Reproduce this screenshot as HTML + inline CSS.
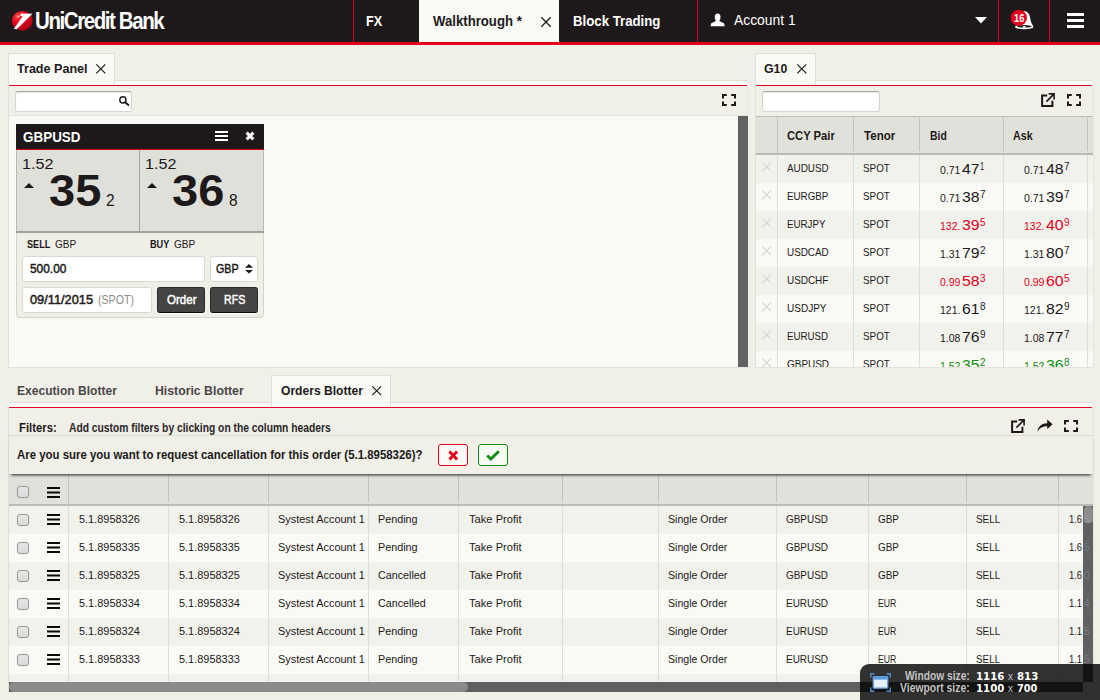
<!DOCTYPE html>
<html lang="en">
<head>
<meta charset="utf-8">
<title>UniCredit Bank - FX Trading</title>
<style>
*{box-sizing:border-box;margin:0;padding:0}
html,body{width:1100px;height:700px;overflow:hidden}
body{position:relative;background:#f0f0e9;font-family:"Liberation Sans",sans-serif;color:#1d191a;font-size:12px}
svg{display:block;overflow:visible}
.t{position:absolute;white-space:pre;line-height:1;transform-origin:0 50%}
</style>
</head>
<body>
<div style="position:absolute;left:0px;top:0px;width:1100px;height:42px;background:#1d191a;"></div>
<div style="position:absolute;left:0px;top:42px;width:1100px;height:3px;background:#e2001a;"></div>
<svg style="position:absolute;left:11px;top:10px" width="22" height="22" viewBox="0 0 22 22"><defs><radialGradient id="lg" cx="30%" cy="28%" r="80%"><stop offset="0" stop-color="#ffc4bc"/><stop offset=".12" stop-color="#f53030"/><stop offset=".5" stop-color="#e2001a"/><stop offset="1" stop-color="#a20015"/></radialGradient></defs>
<ellipse cx="11.3" cy="10.8" rx="10.4" ry="9.9" fill="url(#lg)"/>
<path d="M9.7 3.5L21.5 3.8L5.7 19.3L2.7 19L11.7 6.6L9.2 5.8Z" fill="#fff"/></svg>
<span class="t" style="left:34.61px;top:10px;font-size:23px;font-weight:bold;color:#fff;transform:scaleX(0.8925);letter-spacing:-1.6px;">UniCredit Bank</span>
<div style="position:absolute;left:353px;top:0px;width:1px;height:42px;background:#dc001b;"></div>
<div style="position:absolute;left:697px;top:0px;width:1px;height:42px;background:#dc001b;"></div>
<div style="position:absolute;left:998px;top:0px;width:1px;height:42px;background:#dc001b;"></div>
<div style="position:absolute;left:1049px;top:0px;width:1px;height:42px;background:#dc001b;"></div>
<span class="t" style="left:365.80px;top:14px;font-size:14px;font-weight:bold;color:#fff;transform:scaleX(0.9056);">FX</span>
<div style="position:absolute;left:419px;top:0px;width:140px;height:42px;background:#f9f9f5;"></div>
<span class="t" style="left:432.70px;top:14px;font-size:14px;font-weight:bold;color:#1d191a;transform:scaleX(0.9408);">Walkthrough *</span>
<svg style="position:absolute;left:541px;top:16.5px" width="10" height="10" viewBox="0 0 10 10"><path d="M.3 .3L9.7 9.7M9.7 .3L.3 9.7" stroke="#1d191a" stroke-width="1.25" fill="none"/></svg>
<span class="t" style="left:572.70px;top:14px;font-size:14px;font-weight:bold;color:#fff;transform:scaleX(0.9444);">Block Trading</span>
<svg style="position:absolute;left:710px;top:13px" width="15" height="14" viewBox="0 0 15 14"><ellipse cx="7.6" cy="4.1" rx="2.9" ry="3.5" fill="#fff"/><path d="M5.9 6.2L9.3 6.2L9.7 8.2L14 10.2L14.8 13.3L.4 13.3L1.2 10.2L5.5 8.2Z" fill="#fff"/></svg>
<span class="t" style="left:734.40px;top:12px;font-size:15px;color:#fff;transform:scaleX(0.9237);">Account 1</span>
<svg style="position:absolute;left:975px;top:17px" width="12" height="7" viewBox="0 0 12 7"><path d="M0 0L12 0L6 6.6Z" fill="#fff"/></svg>
<svg style="position:absolute;left:1010px;top:9px" width="24" height="21" viewBox="0 0 24 21"><path d="M13.6 2C17.6 2 19.6 5 20.2 9C20.6 12 21.4 14.8 23.3 17L8 17C9 12 9 4 13.6 2Z" fill="#fff"/>
<ellipse cx="14.2" cy="17.9" rx="9.2" ry="2.3" fill="#fff"/><ellipse cx="14.4" cy="17.3" rx="7.4" ry="1.25" fill="#1d191a"/><ellipse cx="14.2" cy="17.9" rx="1.6" ry=".8" fill="#fff"/>
<circle cx="8.8" cy="8.8" r="8.1" fill="#e2001a"/></svg>
<span class="t" style="left:1013.60px;top:14px;font-size:10px;font-weight:bold;color:#fff;transform:scaleX(0.9341);">16</span>
<div style="position:absolute;left:1067px;top:13px;width:17px;height:3.3px;background:#fff;"></div>
<div style="position:absolute;left:1067px;top:19px;width:17px;height:3.3px;background:#fff;"></div>
<div style="position:absolute;left:1067px;top:25px;width:17px;height:3.3px;background:#fff;"></div>
<div style="position:absolute;left:9px;top:80px;width:738px;height:1px;background:#e0e0d9;"></div>
<div style="position:absolute;left:9px;top:81px;width:738px;height:4px;background:#fbfbf8;"></div>
<div style="position:absolute;left:9px;top:85px;width:738px;height:1px;background:#dc0a26;"></div>
<div style="position:absolute;left:8px;top:53px;width:107px;height:32px;background:#f9f9f5;border:1px solid #e0e0d9;border-bottom:none"></div>
<span class="t" style="left:17.00px;top:62px;font-size:13px;font-weight:bold;color:#1d191a;transform:scaleX(0.9673);">Trade Panel</span>
<svg style="position:absolute;left:96.3px;top:63.6px" width="9.6" height="9.6" viewBox="0 0 9.6 9.6"><path d="M.3 .3L9.299999999999999 9.299999999999999M9.299999999999999 .3L.3 9.299999999999999" stroke="#1d191a" stroke-width="1.15" fill="none"/></svg>
<div style="position:absolute;left:8px;top:86px;width:1px;height:281px;background:#e0e0d9;"></div>
<div style="position:absolute;left:747px;top:86px;width:1px;height:281px;background:#e6e6df;"></div>
<div style="position:absolute;left:9px;top:115px;width:738px;height:1px;background:#e4e4dd;"></div>
<div style="position:absolute;left:9px;top:116px;width:729px;height:251px;background:#f9f9f5;"></div>
<div style="position:absolute;left:738px;top:116px;width:10px;height:251px;background:#626262;"></div>
<div style="position:absolute;left:8px;top:367px;width:740px;height:1px;background:#e4e4dd;"></div>
<div style="position:absolute;left:15px;top:91px;width:117px;height:21px;background:#fff;border:1px solid #d6d6cf;border-top-color:#a9a9a4;border-radius:3px;box-shadow:inset 0 1px 1px rgba(0,0,0,.10)"></div>
<svg style="position:absolute;left:118.7px;top:96px" width="10.4" height="9.8" viewBox="0 0 10.4 9.8"><circle cx="3.9" cy="3.9" r="3.1" stroke="#1d191a" stroke-width="1.4" fill="none"/><path d="M6.2 6.2L9.4 9" stroke="#1d191a" stroke-width="1.9" stroke-linecap="round"/></svg>
<svg style="position:absolute;left:722px;top:94px" width="14" height="12" viewBox="0 0 14 12"><path d="M1 4.6V1H4.8M9.2 1H13V4.6M13 7.4V11H9.2M4.8 11H1V7.4" stroke="#1d191a" stroke-width="2" fill="none"/></svg>
<div style="position:absolute;left:16px;top:124px;width:248px;height:194px;background:#efefe8;border:1px solid #d3d3cc;border-radius:0 0 4px 4px"></div>
<div style="position:absolute;left:16px;top:124px;width:248px;height:25px;background:#1d191a;"></div>
<div style="position:absolute;left:16px;top:149px;width:248px;height:1px;background:#d8001c;"></div>
<span class="t" style="left:23.40px;top:130px;font-size:14px;font-weight:bold;color:#fff;transform:scaleX(0.9601);">GBPUSD</span>
<div style="position:absolute;left:215px;top:131px;width:13px;height:2px;background:#fff;"></div>
<div style="position:absolute;left:215px;top:135px;width:13px;height:2px;background:#fff;"></div>
<div style="position:absolute;left:215px;top:139px;width:13px;height:2px;background:#fff;"></div>
<svg style="position:absolute;left:245px;top:131px" width="10" height="10" viewBox="0 0 10 10"><path d="M1.6 1.6L8.4 8.4M8.4 1.6L1.6 8.4" stroke="#fff" stroke-width="3" fill="none"/></svg>
<div style="position:absolute;left:17px;top:150px;width:246px;height:81px;background:#e0e0da;"></div>
<div style="position:absolute;left:16px;top:150px;width:1px;height:81px;background:#b9b9b3;"></div>
<div style="position:absolute;left:263px;top:150px;width:1px;height:81px;background:#b9b9b3;"></div>
<div style="position:absolute;left:139px;top:150px;width:1px;height:81px;background:#a4a49f;"></div>
<div style="position:absolute;left:16px;top:231px;width:248px;height:2px;background:#a2a29d;"></div>
<span class="t" style="left:21.82px;top:156px;font-size:15px;color:#1d191a;transform:scaleX(1.0771);">1.52</span>
<svg style="position:absolute;left:24px;top:183px" width="10" height="5" viewBox="0 0 10 5"><path d="M0 5L5 0L10 5Z" fill="#1d191a"/></svg>
<span class="t" style="left:48.75px;top:168px;font-size:45px;font-weight:bold;color:#1d191a;transform:scaleX(1.0452);">35</span>
<span class="t" style="left:105.50px;top:193px;font-size:16px;color:#1d191a;transform:scaleX(0.9667);">2</span>
<span class="t" style="left:145.12px;top:156px;font-size:15px;color:#1d191a;transform:scaleX(1.0771);">1.52</span>
<svg style="position:absolute;left:147.3px;top:183px" width="10" height="5" viewBox="0 0 10 5"><path d="M0 5L5 0L10 5Z" fill="#1d191a"/></svg>
<span class="t" style="left:172.05px;top:168px;font-size:45px;font-weight:bold;color:#1d191a;transform:scaleX(1.0452);">36</span>
<span class="t" style="left:228.80px;top:193px;font-size:16px;color:#1d191a;transform:scaleX(0.9667);">8</span>
<span class="t" style="left:27.20px;top:239px;font-size:11px;font-weight:bold;color:#1d191a;transform:scaleX(0.8347);">SELL</span>
<span class="t" style="left:55.00px;top:239px;font-size:11px;color:#1d191a;transform:scaleX(0.9129);">GBP</span>
<span class="t" style="left:150.40px;top:239px;font-size:11px;font-weight:bold;color:#1d191a;transform:scaleX(0.8331);">BUY</span>
<span class="t" style="left:174.40px;top:239px;font-size:11px;color:#1d191a;transform:scaleX(0.9129);">GBP</span>
<div style="position:absolute;left:22px;top:256px;width:183px;height:26px;background:#fff;border:1px solid #d9d9d2;border-radius:3px"></div>
<div style="position:absolute;left:210px;top:256px;width:48px;height:26px;background:#fff;border:1px solid #d9d9d2;border-radius:3px"></div>
<div style="position:absolute;left:22px;top:287px;width:130px;height:26px;background:#fff;border:1px solid #d9d9d2;border-radius:3px"></div>
<span class="t" style="left:29.60px;top:263px;font-size:12px;-webkit-text-stroke:.45px;color:#1d191a;transform:scaleX(0.9911);">500.00</span>
<span class="t" style="left:216.30px;top:263px;font-size:12px;-webkit-text-stroke:.45px;color:#1d191a;transform:scaleX(0.8919);">GBP</span>
<svg style="position:absolute;left:245px;top:264px" width="8" height="10" viewBox="0 0 8 10"><path d="M0 3.8L4 0L8 3.8ZM0 6L8 6L4 9.6Z" fill="#1d191a"/></svg>
<span class="t" style="left:29.60px;top:294px;font-size:12px;-webkit-text-stroke:.45px;color:#1d191a;transform:scaleX(1.0657);">09/11/2015</span>
<span class="t" style="left:97.50px;top:294px;font-size:12px;color:#8d8d88;transform:scaleX(0.8852);">(SPOT)</span>
<div style="position:absolute;left:157px;top:287px;width:48px;height:26px;background:#464443;border:1px solid #2b2929;border-bottom-color:#0e0c0c;border-radius:3px;box-shadow:0 1px 0 #fbfbf8"></div>
<div style="position:absolute;left:210px;top:287px;width:48px;height:26px;background:#464443;border:1px solid #2b2929;border-bottom-color:#0e0c0c;border-radius:3px;box-shadow:0 1px 0 #fbfbf8"></div>
<span class="t" style="left:166.50px;top:294px;font-size:12px;-webkit-text-stroke:.45px;color:#fff;transform:scaleX(0.9616);">Order</span>
<span class="t" style="left:223.80px;top:294px;font-size:12px;-webkit-text-stroke:.45px;color:#fff;transform:scaleX(0.8876);">RFS</span>
<div style="position:absolute;left:756px;top:80px;width:336px;height:1px;background:#e0e0d9;"></div>
<div style="position:absolute;left:756px;top:81px;width:336px;height:4px;background:#fbfbf8;"></div>
<div style="position:absolute;left:756px;top:85px;width:336px;height:1px;background:#dc0a26;"></div>
<div style="position:absolute;left:755px;top:53px;width:61px;height:32px;background:#f9f9f5;border:1px solid #e0e0d9;border-bottom:none"></div>
<span class="t" style="left:764.30px;top:62px;font-size:13px;font-weight:bold;color:#1d191a;transform:scaleX(0.9490);">G10</span>
<svg style="position:absolute;left:796.8px;top:63.6px" width="9.6" height="9.6" viewBox="0 0 9.6 9.6"><path d="M.3 .3L9.299999999999999 9.299999999999999M9.299999999999999 .3L.3 9.299999999999999" stroke="#1d191a" stroke-width="1.15" fill="none"/></svg>
<div style="position:absolute;left:755px;top:86px;width:1px;height:281px;background:#e0e0d9;"></div>
<div style="position:absolute;left:1093px;top:86px;width:1px;height:281px;background:#e6e6df;"></div>
<div style="position:absolute;left:762px;top:91px;width:118px;height:21px;background:#fff;border:1px solid #d6d6cf;border-top-color:#a9a9a4;border-radius:3px;box-shadow:inset 0 1px 1px rgba(0,0,0,.10)"></div>
<svg style="position:absolute;left:1041px;top:93px" width="14" height="14" viewBox="0 0 14 14"><path d="M6.2 2.6H1.1V12.9H11.4V7.8" stroke="#1d191a" stroke-width="2" fill="none"/><path d="M5.4 8.6L12.6 1.4M7.6 .9H13.1V6.4" stroke="#1d191a" stroke-width="1.6" fill="none"/></svg>
<svg style="position:absolute;left:1067px;top:94px" width="14" height="12" viewBox="0 0 14 12"><path d="M1 4.6V1H4.8M9.2 1H13V4.6M13 7.4V11H9.2M4.8 11H1V7.4" stroke="#1d191a" stroke-width="2" fill="none"/></svg>
<div style="position:absolute;left:756px;top:116px;width:337px;height:1px;background:#bdbdb7;"></div>
<div style="position:absolute;left:756px;top:117px;width:337px;height:36px;background:#e1e1db;"></div>
<div style="position:absolute;left:756px;top:153px;width:337px;height:2px;background:#babab4;"></div>
<div style="position:absolute;left:756px;top:155px;width:337px;height:28px;background:#f2f2ed;"></div>
<div style="position:absolute;left:756px;top:183px;width:337px;height:28px;background:#f9f9f5;"></div>
<div style="position:absolute;left:756px;top:211px;width:337px;height:28px;background:#f2f2ed;"></div>
<div style="position:absolute;left:756px;top:239px;width:337px;height:28px;background:#f9f9f5;"></div>
<div style="position:absolute;left:756px;top:267px;width:337px;height:28px;background:#f2f2ed;"></div>
<div style="position:absolute;left:756px;top:295px;width:337px;height:28px;background:#f9f9f5;"></div>
<div style="position:absolute;left:756px;top:323px;width:337px;height:28px;background:#f2f2ed;"></div>
<div style="position:absolute;left:756px;top:351px;width:337px;height:16px;background:#f9f9f5;"></div>
<div style="position:absolute;left:756px;top:367px;width:338px;height:1px;background:#e4e4dd;"></div>
<div style="position:absolute;left:777px;top:117px;width:1px;height:38px;background:#c3c3bd;"></div>
<div style="position:absolute;left:777px;top:155px;width:1px;height:212px;background:#deded8;"></div>
<div style="position:absolute;left:853px;top:117px;width:1px;height:34px;background:#c3c3bd;"></div>
<div style="position:absolute;left:853px;top:155px;width:1px;height:212px;background:#deded8;"></div>
<div style="position:absolute;left:919px;top:117px;width:1px;height:34px;background:#c3c3bd;"></div>
<div style="position:absolute;left:919px;top:155px;width:1px;height:212px;background:#deded8;"></div>
<div style="position:absolute;left:1003px;top:117px;width:1px;height:34px;background:#c3c3bd;"></div>
<div style="position:absolute;left:1003px;top:155px;width:1px;height:212px;background:#deded8;"></div>
<div style="position:absolute;left:1087px;top:117px;width:1px;height:34px;background:#c3c3bd;"></div>
<div style="position:absolute;left:1087px;top:155px;width:1px;height:212px;background:#deded8;"></div>
<span class="t" style="left:787.00px;top:129px;font-size:13px;font-weight:bold;color:#1d191a;transform:scaleX(0.8637);">CCY Pair</span>
<span class="t" style="left:863.70px;top:129px;font-size:13px;font-weight:bold;color:#1d191a;transform:scaleX(0.8920);">Tenor</span>
<span class="t" style="left:929.50px;top:129px;font-size:13px;font-weight:bold;color:#1d191a;transform:scaleX(0.8000);">Bid</span>
<span class="t" style="left:1013.10px;top:129px;font-size:13px;font-weight:bold;color:#1d191a;transform:scaleX(0.8205);">Ask</span>
<svg style="position:absolute;left:761.8px;top:162.4px" width="9.4" height="9.4" viewBox="0 0 9.4 9.4"><path d="M.3 .3L9.1 9.1M9.1 .3L.3 9.1" stroke="#d2d4d8" stroke-width="1.1" fill="none"/></svg>
<span class="t" style="left:787.40px;top:163px;font-size:11px;color:#1d191a;transform:scaleX(0.8988);">AUDUSD</span>
<span class="t" style="left:863.10px;top:163px;font-size:11px;color:#1d191a;transform:scaleX(0.8965);">SPOT</span>
<span class="t" style="left:940.30px;top:165px;font-size:11px;color:#1d191a;transform:scaleX(0.9534);">0.71</span>
<span class="t" style="left:962.00px;top:161px;font-size:15px;color:#1d191a;transform:scaleX(1.0525);">47</span>
<span class="t" style="left:980.00px;top:161px;font-size:11px;color:#1d191a;transform:scaleX(0.6833);">1</span>
<span class="t" style="left:1024.30px;top:165px;font-size:11px;color:#1d191a;transform:scaleX(0.9534);">0.71</span>
<span class="t" style="left:1046.00px;top:161px;font-size:15px;color:#1d191a;transform:scaleX(1.0525);">48</span>
<span class="t" style="left:1064.00px;top:161px;font-size:11px;color:#1d191a;transform:scaleX(0.9000);">7</span>
<svg style="position:absolute;left:761.8px;top:190.4px" width="9.4" height="9.4" viewBox="0 0 9.4 9.4"><path d="M.3 .3L9.1 9.1M9.1 .3L.3 9.1" stroke="#d2d4d8" stroke-width="1.1" fill="none"/></svg>
<span class="t" style="left:787.40px;top:191px;font-size:11px;color:#1d191a;transform:scaleX(0.8912);">EURGBP</span>
<span class="t" style="left:863.10px;top:191px;font-size:11px;color:#1d191a;transform:scaleX(0.8965);">SPOT</span>
<span class="t" style="left:940.30px;top:193px;font-size:11px;color:#1d191a;transform:scaleX(0.9534);">0.71</span>
<span class="t" style="left:962.00px;top:189px;font-size:15px;color:#1d191a;transform:scaleX(1.0525);">38</span>
<span class="t" style="left:980.00px;top:189px;font-size:11px;color:#1d191a;transform:scaleX(0.9000);">7</span>
<span class="t" style="left:1024.30px;top:193px;font-size:11px;color:#1d191a;transform:scaleX(0.9534);">0.71</span>
<span class="t" style="left:1046.00px;top:189px;font-size:15px;color:#1d191a;transform:scaleX(1.0525);">39</span>
<span class="t" style="left:1064.00px;top:189px;font-size:11px;color:#1d191a;transform:scaleX(0.9000);">7</span>
<svg style="position:absolute;left:761.8px;top:218.4px" width="9.4" height="9.4" viewBox="0 0 9.4 9.4"><path d="M.3 .3L9.1 9.1M9.1 .3L.3 9.1" stroke="#d2d4d8" stroke-width="1.1" fill="none"/></svg>
<span class="t" style="left:787.40px;top:219px;font-size:11px;color:#1d191a;transform:scaleX(0.8874);">EURJPY</span>
<span class="t" style="left:863.10px;top:219px;font-size:11px;color:#1d191a;transform:scaleX(0.8965);">SPOT</span>
<span class="t" style="left:940.30px;top:221px;font-size:11px;color:#e2001a;transform:scaleX(0.9507);">132.</span>
<span class="t" style="left:962.00px;top:217px;font-size:15px;color:#e2001a;transform:scaleX(1.0525);">39</span>
<span class="t" style="left:980.00px;top:217px;font-size:11px;color:#e2001a;transform:scaleX(0.9000);">5</span>
<span class="t" style="left:1024.30px;top:221px;font-size:11px;color:#e2001a;transform:scaleX(0.9507);">132.</span>
<span class="t" style="left:1046.00px;top:217px;font-size:15px;color:#e2001a;transform:scaleX(1.0525);">40</span>
<span class="t" style="left:1064.00px;top:217px;font-size:11px;color:#e2001a;transform:scaleX(0.9000);">9</span>
<svg style="position:absolute;left:761.8px;top:246.4px" width="9.4" height="9.4" viewBox="0 0 9.4 9.4"><path d="M.3 .3L9.1 9.1M9.1 .3L.3 9.1" stroke="#d2d4d8" stroke-width="1.1" fill="none"/></svg>
<span class="t" style="left:787.40px;top:247px;font-size:11px;color:#1d191a;transform:scaleX(0.8988);">USDCAD</span>
<span class="t" style="left:863.10px;top:247px;font-size:11px;color:#1d191a;transform:scaleX(0.8965);">SPOT</span>
<span class="t" style="left:940.30px;top:249px;font-size:11px;color:#1d191a;transform:scaleX(0.9534);">1.31</span>
<span class="t" style="left:962.00px;top:245px;font-size:15px;color:#1d191a;transform:scaleX(1.0525);">79</span>
<span class="t" style="left:980.00px;top:245px;font-size:11px;color:#1d191a;transform:scaleX(0.9000);">2</span>
<span class="t" style="left:1024.30px;top:249px;font-size:11px;color:#1d191a;transform:scaleX(0.9534);">1.31</span>
<span class="t" style="left:1046.00px;top:245px;font-size:15px;color:#1d191a;transform:scaleX(1.0525);">80</span>
<span class="t" style="left:1064.00px;top:245px;font-size:11px;color:#1d191a;transform:scaleX(0.9000);">7</span>
<svg style="position:absolute;left:761.8px;top:274.4px" width="9.4" height="9.4" viewBox="0 0 9.4 9.4"><path d="M.3 .3L9.1 9.1M9.1 .3L.3 9.1" stroke="#d2d4d8" stroke-width="1.1" fill="none"/></svg>
<span class="t" style="left:787.40px;top:275px;font-size:11px;color:#1d191a;transform:scaleX(0.9021);">USDCHF</span>
<span class="t" style="left:863.10px;top:275px;font-size:11px;color:#1d191a;transform:scaleX(0.8965);">SPOT</span>
<span class="t" style="left:940.30px;top:277px;font-size:11px;color:#e2001a;transform:scaleX(0.9534);">0.99</span>
<span class="t" style="left:962.00px;top:273px;font-size:15px;color:#e2001a;transform:scaleX(1.0525);">58</span>
<span class="t" style="left:980.00px;top:273px;font-size:11px;color:#e2001a;transform:scaleX(0.9000);">3</span>
<span class="t" style="left:1024.30px;top:277px;font-size:11px;color:#e2001a;transform:scaleX(0.9534);">0.99</span>
<span class="t" style="left:1046.00px;top:273px;font-size:15px;color:#e2001a;transform:scaleX(1.0525);">60</span>
<span class="t" style="left:1064.00px;top:273px;font-size:11px;color:#e2001a;transform:scaleX(0.9000);">5</span>
<svg style="position:absolute;left:761.8px;top:302.4px" width="9.4" height="9.4" viewBox="0 0 9.4 9.4"><path d="M.3 .3L9.1 9.1M9.1 .3L.3 9.1" stroke="#d2d4d8" stroke-width="1.1" fill="none"/></svg>
<span class="t" style="left:787.40px;top:303px;font-size:11px;color:#1d191a;transform:scaleX(0.9101);">USDJPY</span>
<span class="t" style="left:863.10px;top:303px;font-size:11px;color:#1d191a;transform:scaleX(0.8965);">SPOT</span>
<span class="t" style="left:940.30px;top:305px;font-size:11px;color:#1d191a;transform:scaleX(0.9507);">121.</span>
<span class="t" style="left:962.00px;top:301px;font-size:15px;color:#1d191a;transform:scaleX(1.0525);">61</span>
<span class="t" style="left:980.00px;top:301px;font-size:11px;color:#1d191a;transform:scaleX(0.9000);">8</span>
<span class="t" style="left:1024.30px;top:305px;font-size:11px;color:#1d191a;transform:scaleX(0.9507);">121.</span>
<span class="t" style="left:1046.00px;top:301px;font-size:15px;color:#1d191a;transform:scaleX(1.0525);">82</span>
<span class="t" style="left:1064.00px;top:301px;font-size:11px;color:#1d191a;transform:scaleX(0.9000);">9</span>
<svg style="position:absolute;left:761.8px;top:330.4px" width="9.4" height="9.4" viewBox="0 0 9.4 9.4"><path d="M.3 .3L9.1 9.1M9.1 .3L.3 9.1" stroke="#d2d4d8" stroke-width="1.1" fill="none"/></svg>
<span class="t" style="left:787.40px;top:331px;font-size:11px;color:#1d191a;transform:scaleX(0.8838);">EURUSD</span>
<span class="t" style="left:863.10px;top:331px;font-size:11px;color:#1d191a;transform:scaleX(0.8965);">SPOT</span>
<span class="t" style="left:940.30px;top:333px;font-size:11px;color:#1d191a;transform:scaleX(0.9534);">1.08</span>
<span class="t" style="left:962.00px;top:329px;font-size:15px;color:#1d191a;transform:scaleX(1.0525);">76</span>
<span class="t" style="left:980.00px;top:329px;font-size:11px;color:#1d191a;transform:scaleX(0.9000);">9</span>
<span class="t" style="left:1024.30px;top:333px;font-size:11px;color:#1d191a;transform:scaleX(0.9534);">1.08</span>
<span class="t" style="left:1046.00px;top:329px;font-size:15px;color:#1d191a;transform:scaleX(1.0525);">77</span>
<span class="t" style="left:1064.00px;top:329px;font-size:11px;color:#1d191a;transform:scaleX(0.9000);">7</span>
<svg style="position:absolute;left:761.8px;top:358.4px" width="9.4" height="8.6" viewBox="0 0 9.4 8.6"><path d="M.3 .3L8.9 8.9M9.1 .3L.5 8.9" stroke="#d2d4d8" stroke-width="1.1" fill="none"/></svg>
<span class="t" style="left:787.40px;top:359px;font-size:11px;color:#1d191a;transform:scaleX(0.9052);clip-path:inset(0 0 3px 0);">GBPUSD</span>
<span class="t" style="left:863.10px;top:359px;font-size:11px;color:#1d191a;transform:scaleX(0.8965);clip-path:inset(0 0 3px 0);">SPOT</span>
<span class="t" style="left:940.30px;top:361px;font-size:11px;color:#128a12;transform:scaleX(0.9534);clip-path:inset(0 0 5px 0);">1.52</span>
<span class="t" style="left:962.00px;top:357px;font-size:15px;color:#128a12;transform:scaleX(1.0525);clip-path:inset(0 0 5px 0);">35</span>
<span class="t" style="left:980.00px;top:357px;font-size:11px;color:#128a12;transform:scaleX(0.9000);clip-path:inset(0 0 1px 0);">2</span>
<span class="t" style="left:1024.30px;top:361px;font-size:11px;color:#128a12;transform:scaleX(0.9534);clip-path:inset(0 0 5px 0);">1.52</span>
<span class="t" style="left:1046.00px;top:357px;font-size:15px;color:#128a12;transform:scaleX(1.0525);clip-path:inset(0 0 5px 0);">36</span>
<span class="t" style="left:1064.00px;top:357px;font-size:11px;color:#128a12;transform:scaleX(0.9000);clip-path:inset(0 0 1px 0);">8</span>
<div style="position:absolute;left:9px;top:402px;width:1083px;height:1px;background:#e0e0d9;"></div>
<div style="position:absolute;left:9px;top:403px;width:1083px;height:4px;background:#fbfbf8;"></div>
<div style="position:absolute;left:9px;top:407px;width:1083px;height:1px;background:#dc0a26;"></div>
<span class="t" style="left:17.10px;top:384px;font-size:13px;font-weight:bold;color:#4b4748;transform:scaleX(0.9287);">Execution Blotter</span>
<span class="t" style="left:154.60px;top:384px;font-size:13px;font-weight:bold;color:#4b4748;transform:scaleX(0.9441);">Historic Blotter</span>
<div style="position:absolute;left:271px;top:375px;width:120px;height:32px;background:#f9f9f5;border:1px solid #e0e0d9;border-bottom:none"></div>
<span class="t" style="left:280.60px;top:384px;font-size:13px;font-weight:bold;color:#1d191a;transform:scaleX(0.9299);">Orders Blotter</span>
<svg style="position:absolute;left:372px;top:385.6px" width="9.4" height="9.4" viewBox="0 0 9.4 9.4"><path d="M.3 .3L9.1 9.1M9.1 .3L.3 9.1" stroke="#1d191a" stroke-width="1.15" fill="none"/></svg>
<div style="position:absolute;left:8px;top:408px;width:1px;height:284px;background:#e0e0d9;"></div>
<div style="position:absolute;left:1093px;top:408px;width:1px;height:284px;background:#e6e6df;"></div>
<span class="t" style="left:19.40px;top:422px;font-size:12px;font-weight:bold;color:#1d191a;transform:scaleX(0.9433);">Filters:</span>
<span class="t" style="left:68.90px;top:422px;font-size:12px;font-weight:bold;color:#2a2627;transform:scaleX(0.8567);">Add custom filters by clicking on the column headers</span>
<svg style="position:absolute;left:1011px;top:418.5px" width="14" height="14" viewBox="0 0 14 14"><path d="M6.2 2.6H1.1V12.9H11.4V7.8" stroke="#1d191a" stroke-width="2" fill="none"/><path d="M5.4 8.6L12.6 1.4M7.6 .9H13.1V6.4" stroke="#1d191a" stroke-width="1.6" fill="none"/></svg>
<svg style="position:absolute;left:1037px;top:419px" width="17" height="13" viewBox="0 0 17 13"><path d="M.3 12.8C1.2 7.2 4.8 4.4 10.2 4.3V.6L15.6 5.3L10.2 10V7.2C6 7.2 2.6 8.6 .3 12.8Z" fill="#1d191a"/></svg>
<svg style="position:absolute;left:1064px;top:419.5px" width="14" height="12" viewBox="0 0 14 12"><path d="M1 4.6V1H4.8M9.2 1H13V4.6M13 7.4V11H9.2M4.8 11H1V7.4" stroke="#1d191a" stroke-width="2" fill="none"/></svg>
<div style="position:absolute;left:9px;top:435px;width:1084px;height:1px;background:#dadad3;"></div>
<div style="position:absolute;left:9px;top:474px;width:1084px;height:30px;background:#e1e1db;"></div>
<div style="position:absolute;left:9px;top:504px;width:1084px;height:2px;background:#babab4;"></div>
<div style="position:absolute;left:9px;top:506px;width:1084px;height:28px;background:#f2f2ed;"></div>
<div style="position:absolute;left:9px;top:534px;width:1084px;height:28px;background:#f9f9f5;"></div>
<div style="position:absolute;left:9px;top:562px;width:1084px;height:28px;background:#f2f2ed;"></div>
<div style="position:absolute;left:9px;top:590px;width:1084px;height:28px;background:#f9f9f5;"></div>
<div style="position:absolute;left:9px;top:618px;width:1084px;height:28px;background:#f2f2ed;"></div>
<div style="position:absolute;left:9px;top:646px;width:1084px;height:28px;background:#f9f9f5;"></div>
<div style="position:absolute;left:9px;top:674px;width:1084px;height:8px;background:#f2f2ed;"></div>
<div style="position:absolute;left:68px;top:474px;width:1px;height:32px;background:#c3c3bd;"></div>
<div style="position:absolute;left:68px;top:506px;width:1px;height:176px;background:#deded8;"></div>
<div style="position:absolute;left:168px;top:474px;width:1px;height:28px;background:#c3c3bd;"></div>
<div style="position:absolute;left:168px;top:506px;width:1px;height:176px;background:#deded8;"></div>
<div style="position:absolute;left:268px;top:474px;width:1px;height:28px;background:#c3c3bd;"></div>
<div style="position:absolute;left:268px;top:506px;width:1px;height:176px;background:#deded8;"></div>
<div style="position:absolute;left:368px;top:474px;width:1px;height:28px;background:#c3c3bd;"></div>
<div style="position:absolute;left:368px;top:506px;width:1px;height:176px;background:#deded8;"></div>
<div style="position:absolute;left:458px;top:474px;width:1px;height:28px;background:#c3c3bd;"></div>
<div style="position:absolute;left:458px;top:506px;width:1px;height:176px;background:#deded8;"></div>
<div style="position:absolute;left:562px;top:474px;width:1px;height:28px;background:#c3c3bd;"></div>
<div style="position:absolute;left:562px;top:506px;width:1px;height:176px;background:#deded8;"></div>
<div style="position:absolute;left:658px;top:474px;width:1px;height:28px;background:#c3c3bd;"></div>
<div style="position:absolute;left:658px;top:506px;width:1px;height:176px;background:#deded8;"></div>
<div style="position:absolute;left:776px;top:474px;width:1px;height:28px;background:#c3c3bd;"></div>
<div style="position:absolute;left:776px;top:506px;width:1px;height:176px;background:#deded8;"></div>
<div style="position:absolute;left:868px;top:474px;width:1px;height:28px;background:#c3c3bd;"></div>
<div style="position:absolute;left:868px;top:506px;width:1px;height:176px;background:#deded8;"></div>
<div style="position:absolute;left:966px;top:474px;width:1px;height:28px;background:#c3c3bd;"></div>
<div style="position:absolute;left:966px;top:506px;width:1px;height:176px;background:#deded8;"></div>
<div style="position:absolute;left:1058px;top:474px;width:1px;height:28px;background:#c3c3bd;"></div>
<div style="position:absolute;left:1058px;top:506px;width:1px;height:176px;background:#deded8;"></div>
<div style="position:absolute;left:17px;top:486px;width:12px;height:12px;background:linear-gradient(#e6e6e6,#dadada);border:1px solid #9d9d9d;border-radius:3px;box-shadow:0 0 1px rgba(0,0,0,.25)"></div>
<svg style="position:absolute;left:47px;top:487px" width="13" height="11" viewBox="0 0 13 11"><path d="M0 0H13V2H0ZM0 4.5H13V6.5H0ZM0 9H13V11H0Z" fill="#0c0809"/></svg>
<div style="position:absolute;left:17px;top:514px;width:12px;height:12px;background:linear-gradient(#e6e6e6,#dadada);border:1px solid #9d9d9d;border-radius:3px;box-shadow:0 0 1px rgba(0,0,0,.25)"></div>
<svg style="position:absolute;left:47px;top:514px" width="13" height="11" viewBox="0 0 13 11"><path d="M0 0H13V2H0ZM0 4.5H13V6.5H0ZM0 9H13V11H0Z" fill="#0c0809"/></svg>
<span class="t" style="left:78.50px;top:514px;font-size:11px;color:#1d191a;transform:scaleX(0.9942);">5.1.8958326</span>
<span class="t" style="left:178.50px;top:514px;font-size:11px;color:#1d191a;transform:scaleX(0.9942);">5.1.8958326</span>
<span class="t" style="left:277.70px;top:514px;font-size:11px;color:#1d191a;transform:scaleX(0.9929);">Systest Account 1</span>
<span class="t" style="left:378.10px;top:514px;font-size:11px;color:#1d191a;transform:scaleX(0.9813);">Pending</span>
<span class="t" style="left:468.60px;top:514px;font-size:11px;color:#1d191a;transform:scaleX(1.0133);">Take Profit</span>
<span class="t" style="left:668.10px;top:514px;font-size:11px;color:#1d191a;transform:scaleX(0.9615);">Single Order</span>
<span class="t" style="left:786.20px;top:514px;font-size:11px;color:#1d191a;transform:scaleX(0.9030);">GBPUSD</span>
<span class="t" style="left:878.30px;top:514px;font-size:11px;color:#1d191a;transform:scaleX(0.9042);">GBP</span>
<span class="t" style="left:976.40px;top:514px;font-size:11px;color:#1d191a;transform:scaleX(0.8958);">SELL</span>
<span class="t" style="left:1068.60px;top:514px;font-size:11px;color:#1d191a;transform:scaleX(0.8567);">1.6</span>
<div style="position:absolute;left:17px;top:542px;width:12px;height:12px;background:linear-gradient(#e6e6e6,#dadada);border:1px solid #9d9d9d;border-radius:3px;box-shadow:0 0 1px rgba(0,0,0,.25)"></div>
<svg style="position:absolute;left:47px;top:542px" width="13" height="11" viewBox="0 0 13 11"><path d="M0 0H13V2H0ZM0 4.5H13V6.5H0ZM0 9H13V11H0Z" fill="#0c0809"/></svg>
<span class="t" style="left:78.50px;top:542px;font-size:11px;color:#1d191a;transform:scaleX(0.9942);">5.1.8958335</span>
<span class="t" style="left:178.50px;top:542px;font-size:11px;color:#1d191a;transform:scaleX(0.9942);">5.1.8958335</span>
<span class="t" style="left:277.70px;top:542px;font-size:11px;color:#1d191a;transform:scaleX(0.9929);">Systest Account 1</span>
<span class="t" style="left:378.10px;top:542px;font-size:11px;color:#1d191a;transform:scaleX(0.9813);">Pending</span>
<span class="t" style="left:468.60px;top:542px;font-size:11px;color:#1d191a;transform:scaleX(1.0133);">Take Profit</span>
<span class="t" style="left:668.10px;top:542px;font-size:11px;color:#1d191a;transform:scaleX(0.9615);">Single Order</span>
<span class="t" style="left:786.20px;top:542px;font-size:11px;color:#1d191a;transform:scaleX(0.9030);">GBPUSD</span>
<span class="t" style="left:878.30px;top:542px;font-size:11px;color:#1d191a;transform:scaleX(0.9042);">GBP</span>
<span class="t" style="left:976.40px;top:542px;font-size:11px;color:#1d191a;transform:scaleX(0.8958);">SELL</span>
<span class="t" style="left:1068.60px;top:542px;font-size:11px;color:#1d191a;transform:scaleX(0.8567);">1.6</span>
<div style="position:absolute;left:17px;top:570px;width:12px;height:12px;background:linear-gradient(#e6e6e6,#dadada);border:1px solid #9d9d9d;border-radius:3px;box-shadow:0 0 1px rgba(0,0,0,.25)"></div>
<svg style="position:absolute;left:47px;top:570px" width="13" height="11" viewBox="0 0 13 11"><path d="M0 0H13V2H0ZM0 4.5H13V6.5H0ZM0 9H13V11H0Z" fill="#0c0809"/></svg>
<span class="t" style="left:78.50px;top:570px;font-size:11px;color:#1d191a;transform:scaleX(0.9942);">5.1.8958325</span>
<span class="t" style="left:178.50px;top:570px;font-size:11px;color:#1d191a;transform:scaleX(0.9942);">5.1.8958325</span>
<span class="t" style="left:277.70px;top:570px;font-size:11px;color:#1d191a;transform:scaleX(0.9929);">Systest Account 1</span>
<span class="t" style="left:378.10px;top:570px;font-size:11px;color:#1d191a;transform:scaleX(0.9774);">Cancelled</span>
<span class="t" style="left:468.60px;top:570px;font-size:11px;color:#1d191a;transform:scaleX(1.0133);">Take Profit</span>
<span class="t" style="left:668.10px;top:570px;font-size:11px;color:#1d191a;transform:scaleX(0.9615);">Single Order</span>
<span class="t" style="left:786.20px;top:570px;font-size:11px;color:#1d191a;transform:scaleX(0.9030);">GBPUSD</span>
<span class="t" style="left:878.30px;top:570px;font-size:11px;color:#1d191a;transform:scaleX(0.9042);">GBP</span>
<span class="t" style="left:976.40px;top:570px;font-size:11px;color:#1d191a;transform:scaleX(0.8958);">SELL</span>
<span class="t" style="left:1068.60px;top:570px;font-size:11px;color:#1d191a;transform:scaleX(0.8567);">1.6</span>
<div style="position:absolute;left:17px;top:598px;width:12px;height:12px;background:linear-gradient(#e6e6e6,#dadada);border:1px solid #9d9d9d;border-radius:3px;box-shadow:0 0 1px rgba(0,0,0,.25)"></div>
<svg style="position:absolute;left:47px;top:598px" width="13" height="11" viewBox="0 0 13 11"><path d="M0 0H13V2H0ZM0 4.5H13V6.5H0ZM0 9H13V11H0Z" fill="#0c0809"/></svg>
<span class="t" style="left:78.50px;top:598px;font-size:11px;color:#1d191a;transform:scaleX(0.9942);">5.1.8958334</span>
<span class="t" style="left:178.50px;top:598px;font-size:11px;color:#1d191a;transform:scaleX(0.9942);">5.1.8958334</span>
<span class="t" style="left:277.70px;top:598px;font-size:11px;color:#1d191a;transform:scaleX(0.9929);">Systest Account 1</span>
<span class="t" style="left:378.10px;top:598px;font-size:11px;color:#1d191a;transform:scaleX(0.9774);">Cancelled</span>
<span class="t" style="left:468.60px;top:598px;font-size:11px;color:#1d191a;transform:scaleX(1.0133);">Take Profit</span>
<span class="t" style="left:668.10px;top:598px;font-size:11px;color:#1d191a;transform:scaleX(0.9615);">Single Order</span>
<span class="t" style="left:786.20px;top:598px;font-size:11px;color:#1d191a;transform:scaleX(0.9031);">EURUSD</span>
<span class="t" style="left:878.30px;top:598px;font-size:11px;color:#1d191a;transform:scaleX(0.7818);">EUR</span>
<span class="t" style="left:976.40px;top:598px;font-size:11px;color:#1d191a;transform:scaleX(0.8958);">SELL</span>
<span class="t" style="left:1068.60px;top:598px;font-size:11px;color:#1d191a;transform:scaleX(0.8567);">1.1</span>
<div style="position:absolute;left:17px;top:626px;width:12px;height:12px;background:linear-gradient(#e6e6e6,#dadada);border:1px solid #9d9d9d;border-radius:3px;box-shadow:0 0 1px rgba(0,0,0,.25)"></div>
<svg style="position:absolute;left:47px;top:626px" width="13" height="11" viewBox="0 0 13 11"><path d="M0 0H13V2H0ZM0 4.5H13V6.5H0ZM0 9H13V11H0Z" fill="#0c0809"/></svg>
<span class="t" style="left:78.50px;top:626px;font-size:11px;color:#1d191a;transform:scaleX(0.9942);">5.1.8958324</span>
<span class="t" style="left:178.50px;top:626px;font-size:11px;color:#1d191a;transform:scaleX(0.9942);">5.1.8958324</span>
<span class="t" style="left:277.70px;top:626px;font-size:11px;color:#1d191a;transform:scaleX(0.9929);">Systest Account 1</span>
<span class="t" style="left:378.10px;top:626px;font-size:11px;color:#1d191a;transform:scaleX(0.9813);">Pending</span>
<span class="t" style="left:468.60px;top:626px;font-size:11px;color:#1d191a;transform:scaleX(1.0133);">Take Profit</span>
<span class="t" style="left:668.10px;top:626px;font-size:11px;color:#1d191a;transform:scaleX(0.9615);">Single Order</span>
<span class="t" style="left:786.20px;top:626px;font-size:11px;color:#1d191a;transform:scaleX(0.9031);">EURUSD</span>
<span class="t" style="left:878.30px;top:626px;font-size:11px;color:#1d191a;transform:scaleX(0.7818);">EUR</span>
<span class="t" style="left:976.40px;top:626px;font-size:11px;color:#1d191a;transform:scaleX(0.8958);">SELL</span>
<span class="t" style="left:1068.60px;top:626px;font-size:11px;color:#1d191a;transform:scaleX(0.8567);">1.1</span>
<div style="position:absolute;left:17px;top:654px;width:12px;height:12px;background:linear-gradient(#e6e6e6,#dadada);border:1px solid #9d9d9d;border-radius:3px;box-shadow:0 0 1px rgba(0,0,0,.25)"></div>
<svg style="position:absolute;left:47px;top:654px" width="13" height="11" viewBox="0 0 13 11"><path d="M0 0H13V2H0ZM0 4.5H13V6.5H0ZM0 9H13V11H0Z" fill="#0c0809"/></svg>
<span class="t" style="left:78.50px;top:654px;font-size:11px;color:#1d191a;transform:scaleX(0.9942);">5.1.8958333</span>
<span class="t" style="left:178.50px;top:654px;font-size:11px;color:#1d191a;transform:scaleX(0.9942);">5.1.8958333</span>
<span class="t" style="left:277.70px;top:654px;font-size:11px;color:#1d191a;transform:scaleX(0.9929);">Systest Account 1</span>
<span class="t" style="left:378.10px;top:654px;font-size:11px;color:#1d191a;transform:scaleX(0.9813);">Pending</span>
<span class="t" style="left:468.60px;top:654px;font-size:11px;color:#1d191a;transform:scaleX(1.0133);">Take Profit</span>
<span class="t" style="left:668.10px;top:654px;font-size:11px;color:#1d191a;transform:scaleX(0.9615);">Single Order</span>
<span class="t" style="left:786.20px;top:654px;font-size:11px;color:#1d191a;transform:scaleX(0.9031);">EURUSD</span>
<span class="t" style="left:878.30px;top:654px;font-size:11px;color:#1d191a;transform:scaleX(0.7818);">EUR</span>
<span class="t" style="left:976.40px;top:654px;font-size:11px;color:#1d191a;transform:scaleX(0.8958);">SELL</span>
<span class="t" style="left:1068.60px;top:654px;font-size:11px;color:#1d191a;transform:scaleX(0.8567);">1.1</span>
<div style="position:absolute;left:1083px;top:506px;width:10px;height:176px;background:rgba(85,85,85,.93);"></div>
<div style="position:absolute;left:1083.5px;top:506px;width:9px;height:17px;background:#8c8c8c;border-radius:4px"></div>
<span class="t" style="left:1084.20px;top:514px;font-size:11px;color:#9a9a9a;transform:scaleX(0.9000);">5</span>
<span class="t" style="left:1084.20px;top:542px;font-size:11px;color:#7b7b7b;transform:scaleX(0.9000);">5</span>
<span class="t" style="left:1084.20px;top:570px;font-size:11px;color:#7b7b7b;transform:scaleX(0.9000);">0</span>
<span class="t" style="left:1084.20px;top:598px;font-size:11px;color:#7b7b7b;transform:scaleX(0.9000);">4</span>
<span class="t" style="left:1084.20px;top:626px;font-size:11px;color:#7b7b7b;transform:scaleX(0.9000);">5</span>
<span class="t" style="left:1084.20px;top:654px;font-size:11px;color:#7b7b7b;transform:scaleX(0.9000);">5</span>
<div style="position:absolute;left:9px;top:682px;width:1074px;height:10px;background:#5f5f5f;"></div>
<div style="position:absolute;left:9px;top:682px;width:459px;height:10px;background:#8a8a8a;border-radius:5px"></div>
<div style="position:absolute;left:9px;top:436px;width:1084px;height:38px;background:#f0f0e9;box-shadow:0 3px 3px -2px rgba(0,0,0,.85)"></div>
<span class="t" style="left:17.10px;top:449px;font-size:12px;font-weight:bold;color:#1d191a;transform:scaleX(0.9514);">Are you sure you want to request cancellation for this order (5.1.8958326)?</span>
<div style="position:absolute;left:438px;top:444px;width:30px;height:22px;background:#f9f9f5;border:1px solid #e2001a;border-radius:3px"></div>
<svg style="position:absolute;left:448px;top:450px" width="10.5" height="11" viewBox="0 0 10.5 11"><path d="M1.4 1.6L9.1 9.6M9.1 1.6L1.4 9.6" stroke="#e2001a" stroke-width="2.9" fill="none"/></svg>
<div style="position:absolute;left:478px;top:444px;width:30px;height:22px;background:#f9f9f5;border:1px solid #0b8a0b;border-radius:3px"></div>
<svg style="position:absolute;left:486px;top:450px" width="14" height="11" viewBox="0 0 14 11"><path d="M1.2 5.6L4.9 9.1L12.8 1.3" stroke="#0b8a0b" stroke-width="2.8" fill="none"/></svg>
<div style="position:absolute;left:860px;top:664px;width:240px;height:36px;background:rgba(0,0,0,.8);border-radius:9px 0 0 0"></div>
<svg style="position:absolute;left:870px;top:673px" width="21" height="19" viewBox="0 0 21 19"><path d="M.8 4.4V.8H4.4M16.6 .8H20.2V4.4M20.2 14.6V18.2H16.6M4.4 18.2H.8V14.6" stroke="#4a8fd6" stroke-width="1.4" fill="none"/>
<rect x="3.2" y="3.6" width="14.6" height="11.6" rx="1" fill="#e8f0fa" stroke="#5b9be0" stroke-width="1.2"/><rect x="3.2" y="3.6" width="14.6" height="3" fill="#5b9be0"/></svg>
<span class="t" style="left:905.10px;top:670px;font-size:12px;font-weight:bold;color:#c2c2c2;transform:scaleX(0.8532);">Window size:</span>
<span class="t" style="left:900.20px;top:682px;font-size:12px;font-weight:bold;color:#c2c2c2;transform:scaleX(0.8657);">Viewport size:</span>
<span class="t" style="left:976.08px;top:671px;font-size:11px;font-weight:bold;font-family:'DejaVu Sans',sans-serif;color:#fff;transform:scaleX(0.9245);">1116</span>
<span class="t" style="left:1008.20px;top:671px;font-size:11px;color:#c2c2c2;transform:scaleX(0.9000);">x</span>
<span class="t" style="left:1016.50px;top:671px;font-size:11px;font-weight:bold;font-family:'DejaVu Sans',sans-serif;color:#fff;transform:scaleX(0.9279);">813</span>
<span class="t" style="left:976.08px;top:683px;font-size:11px;font-weight:bold;font-family:'DejaVu Sans',sans-serif;color:#fff;transform:scaleX(0.9245);">1100</span>
<span class="t" style="left:1008.20px;top:683px;font-size:11px;color:#c2c2c2;transform:scaleX(0.9000);">x</span>
<span class="t" style="left:1016.50px;top:683px;font-size:11px;font-weight:bold;font-family:'DejaVu Sans',sans-serif;color:#fff;transform:scaleX(0.8881);">700</span>
</body>
</html>
